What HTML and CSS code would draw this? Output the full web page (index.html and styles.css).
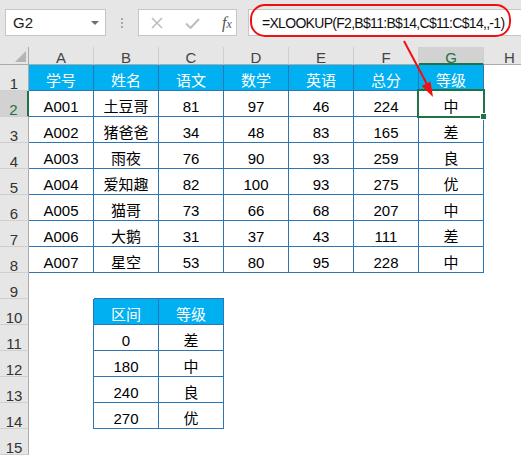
FILE: index.html
```html
<!DOCTYPE html>
<html lang="zh-CN">
<head>
<meta charset="utf-8">
<title>XLOOKUP</title>
<link rel="stylesheet" href="styles.css">
</head>
<body>
<div class="topbar">
  <div class="namebox"><span>G2</span><span class="caret"></span></div>
  <div class="grip"><i></i><i></i><i></i></div>
  <div class="fnbox">
    <svg class="ico-x" width="12" height="12" viewBox="0 0 12 12"><path d="M1 1L11 11M11 1L1 11" stroke="#bdbdbd" stroke-width="1.6" fill="none"/></svg>
    <svg class="ico-ok" width="15" height="11" viewBox="0 0 15 11"><path d="M1 5.5L5.5 10L14 1" stroke="#bdbdbd" stroke-width="2" fill="none"/></svg>
    <span class="fx">f<span class="fxx">x</span></span>
  </div>
  <div class="fxinput">=XLOOKUP(F2,B$11:B$14,C$11:C$14,,-1)</div>
</div>
<div class="sheet">
  <div class="corner"><span class="tri"></span></div><div class="ch">A</div><div class="ch">B</div><div class="ch">C</div><div class="ch">D</div><div class="ch">E</div><div class="ch">F</div><div class="ch sel">G</div><div class="ch last">H</div>
  <div class="rh">1</div><div class="t h">学号</div><div class="t h">姓名</div><div class="t h">语文</div><div class="t h">数学</div><div class="t h">英语</div><div class="t h">总分</div><div class="t h">等级</div><div class="c"></div>
  <div class="rh sel">2</div><div class="t">A001</div><div class="t">土豆哥</div><div class="t">81</div><div class="t">97</div><div class="t">46</div><div class="t">224</div><div class="t">中</div><div class="c"></div>
  <div class="rh">3</div><div class="t">A002</div><div class="t">猪爸爸</div><div class="t">34</div><div class="t">48</div><div class="t">83</div><div class="t">165</div><div class="t">差</div><div class="c"></div>
  <div class="rh">4</div><div class="t">A003</div><div class="t">雨夜</div><div class="t">76</div><div class="t">90</div><div class="t">93</div><div class="t">259</div><div class="t">良</div><div class="c"></div>
  <div class="rh">5</div><div class="t">A004</div><div class="t">爱知趣</div><div class="t">82</div><div class="t">100</div><div class="t">93</div><div class="t">275</div><div class="t">优</div><div class="c"></div>
  <div class="rh">6</div><div class="t">A005</div><div class="t">猫哥</div><div class="t">73</div><div class="t">66</div><div class="t">68</div><div class="t">207</div><div class="t">中</div><div class="c"></div>
  <div class="rh">7</div><div class="t">A006</div><div class="t">大鹅</div><div class="t">31</div><div class="t">37</div><div class="t">43</div><div class="t">111</div><div class="t">差</div><div class="c"></div>
  <div class="rh">8</div><div class="t">A007</div><div class="t">星空</div><div class="t">53</div><div class="t">80</div><div class="t">95</div><div class="t">228</div><div class="t">中</div><div class="c"></div>
  <div class="rh">9</div><div class="c"></div><div class="c tb"></div><div class="c tb"></div><div class="c"></div><div class="c"></div><div class="c"></div><div class="c"></div><div class="c"></div>
  <div class="rh">10</div><div class="c tl"></div><div class="t h">区间</div><div class="t h">等级</div><div class="c"></div><div class="c"></div><div class="c"></div><div class="c"></div><div class="c"></div>
  <div class="rh">11</div><div class="c tl"></div><div class="t">0</div><div class="t">差</div><div class="c"></div><div class="c"></div><div class="c"></div><div class="c"></div><div class="c"></div>
  <div class="rh">12</div><div class="c tl"></div><div class="t">180</div><div class="t">中</div><div class="c"></div><div class="c"></div><div class="c"></div><div class="c"></div><div class="c"></div>
  <div class="rh">13</div><div class="c tl"></div><div class="t">240</div><div class="t">良</div><div class="c"></div><div class="c"></div><div class="c"></div><div class="c"></div><div class="c"></div>
  <div class="rh">14</div><div class="c tl"></div><div class="t">270</div><div class="t">优</div><div class="c"></div><div class="c"></div><div class="c"></div><div class="c"></div><div class="c"></div>
  <div class="rh">15</div><div class="c"></div><div class="c"></div><div class="c"></div><div class="c"></div><div class="c"></div><div class="c"></div><div class="c"></div><div class="c"></div>
  <div class="selection"><span class="handle"></span></div>
</div>
<svg class="annot" width="521" height="455" viewBox="0 0 521 455">
  <rect x="251" y="5" width="259" height="31" rx="14" ry="14" fill="none" stroke="#f01010" stroke-width="2"/>
  <line x1="404" y1="41" x2="429" y2="88" stroke="#f01010" stroke-width="2"/>
  <polygon points="433,97 421.7,86 430.5,81.4" fill="#f01010"/>
</svg>
</body>
</html>
```
FILE: styles.css
```css
* { box-sizing: border-box; margin: 0; padding: 0; }
html, body { width: 521px; height: 455px; overflow: hidden; background: #fff; }
body {
  position: relative;
  font-family: "Liberation Sans", "Noto Sans CJK SC", sans-serif;
  font-size: 15px;
  color: #000;
}
.topbar {
  height: 47px;
  background: #e6e6e6;
  display: flex;
  align-items: flex-start;
  padding: 9px 0 0 5px;
}
.namebox {
  width: 101px;
  height: 27px;
  background: #fff;
  border: 1px solid #c6c6c6;
  display: flex;
  align-items: center;
  justify-content: space-between;
  padding: 0 6px 0 7px;
  color: #222;
}
.caret {
  width: 0; height: 0;
  border-left: 4px solid transparent;
  border-right: 4px solid transparent;
  border-top: 4px solid #6e6e6e;
}
.grip {
  width: 32px;
  height: 27px;
  display: flex;
  flex-direction: column;
  align-items: center;
  justify-content: center;
  gap: 2px;
}
.grip i { display: block; width: 2px; height: 2px; background: #a8a8a8; }
.fnbox {
  width: 99px;
  height: 27px;
  background: #fff;
  border: 1px solid #c6c6c6;
  display: flex;
  align-items: center;
  padding-left: 12px;
}
.ico-x { margin-top: 1px; }
.ico-ok { margin-left: 22px; margin-top: 2px; }
.fx {
  margin-left: 22px;
  font-family: "Liberation Serif", serif;
  font-style: italic;
  font-size: 16px;
  color: #555;
  line-height: 1;
}
.fxx { font-size: 12px; }
.fxinput {
  margin-left: 11px;
  flex: 1;
  height: 27px;
  background: #fff;
  border: 1px solid #c6c6c6;
  border-right: none;
  display: flex;
  align-items: center;
  padding-left: 13px;
  font-size: 14px;
  letter-spacing: -0.7px;
  color: #111;
  white-space: nowrap;
}
.sheet {
  position: relative;
  display: grid;
  grid-template-columns: 29px repeat(7, 65px) 37px;
  grid-template-rows: 18px;
  grid-auto-rows: 26px;
}
.corner {
  background: #e6e6e6;
  border-right: 1px solid #ababab;
  border-bottom: 1px solid #ababab;
  display: flex;
  justify-content: flex-end;
  align-items: flex-end;
  padding: 0 2px 2px 0;
}
.tri {
  width: 0; height: 0;
  border-left: 11px solid transparent;
  border-bottom: 11px solid #b4b4b4;
}
.ch {
  background: #e6e6e6;
  border-right: 1px solid #cfcfcf;
  border-bottom: 1px solid #ababab;
  display: flex;
  justify-content: center;
  align-items: flex-end;
  line-height: 12px;
  color: #444;
}
.ch.last { justify-content: flex-start; padding-left: 20px; border-right: none; }
.ch.sel {
  background: #d2d2d2;
  color: #217346;
  border-bottom: 2px solid #217346;
  line-height: 11px;
}
.rh {
  background: #e6e6e6;
  border-right: 1px solid #ababab;
  border-bottom: 1px solid #cfcfcf;
  display: flex;
  justify-content: center;
  align-items: flex-end;
  line-height: 12px;
  color: #333;
}
.rh.sel {
  background: #d2d2d2;
  color: #217346;
  border-right: 2px solid #217346;
}
.c, .t {
  display: flex;
  justify-content: center;
  align-items: flex-end;
  line-height: 18px;
  white-space: nowrap;
}
.t {
  border-right: 1px solid #2e75b6;
  border-bottom: 1px solid #2e75b6;
}
.t.h { background: #00b0f0; color: #fff; }
.tb { border-bottom: 1px solid #2e75b6; }
.tl { border-right: 1px solid #2e75b6; }
.selection {
  position: absolute;
  left: 417px;
  top: 42px;
  width: 68px;
  height: 29px;
  border: 2px solid #217346;
}
.handle {
  position: absolute;
  right: -4px;
  bottom: -4px;
  width: 7px;
  height: 7px;
  background: #217346;
  border: 1px solid #fff;
}
.annot {
  position: absolute;
  left: 0;
  top: 0;
  pointer-events: none;
}
```
